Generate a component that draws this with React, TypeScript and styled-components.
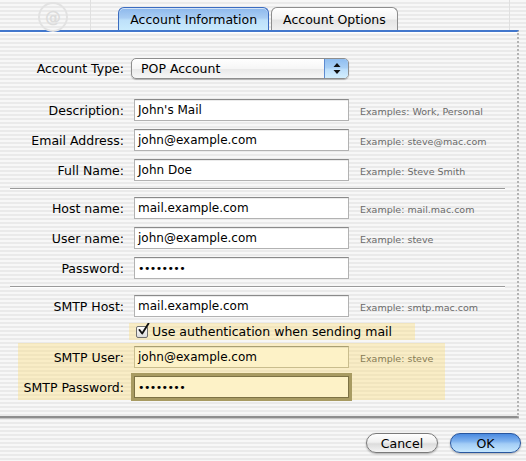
import React from 'react';
import styled, { createGlobalStyle } from 'styled-components';

const GlobalStyle = createGlobalStyle`
  html, body {
    margin: 0;
    padding: 0;
  }
  body {
    font-family: "DejaVu Sans", "Liberation Sans", sans-serif;
    color: #000;
  }
`;

const stripes =
  'repeating-linear-gradient(to bottom, #f7f7f7 0px, #f7f7f7 2px, #eaeaea 2px, #eaeaea 4px)';

export default function App() {
  return (
    <Window>
      <GlobalStyle />
      <TabBar>
        <Ghost style={{ left: 38 }}>@</Ghost>
        <GhostLine style={{ left: 90 }} />
        <GhostLine style={{ left: 509 }} />
        <Tab active>Account Information</Tab>
        <Tab>Account Options</Tab>
      </TabBar>

      <Panel>
        <Row>
          <Label>Account Type:</Label>
          <Popup>
            <PopupText>POP Account</PopupText>
            <PopupArrows>
              <svg width="8" height="11" viewBox="0 0 8 11">
                <path d="M4 0 L7.5 4 L0.5 4 Z" fill="#111" />
                <path d="M4 11 L7.5 7 L0.5 7 Z" fill="#111" />
              </svg>
            </PopupArrows>
          </Popup>
        </Row>

        <Group top={20}>
          <Row>
            <Label>Description:</Label>
            <Field>John's Mail</Field>
            <Hint>Examples: Work, Personal</Hint>
          </Row>
          <Row>
            <Label>Email Address:</Label>
            <Field>john@example.com</Field>
            <Hint>Example: steve@mac.com</Hint>
          </Row>
          <Row>
            <Label>Full Name:</Label>
            <Field>John Doe</Field>
            <Hint>Example: Steve Smith</Hint>
          </Row>
        </Group>

        <Separator />

        <Group>
          <Row>
            <Label>Host name:</Label>
            <Field>mail.example.com</Field>
            <Hint>Example: mail.mac.com</Hint>
          </Row>
          <Row>
            <Label>User name:</Label>
            <Field>john@example.com</Field>
            <Hint>Example: steve</Hint>
          </Row>
          <Row>
            <Label>Password:</Label>
            <Field secret>••••••••</Field>
          </Row>
        </Group>

        <Separator />

        <Row>
          <Label>SMTP Host:</Label>
          <Field>mail.example.com</Field>
          <Hint>Example: smtp.mac.com</Hint>
        </Row>

        <CheckRow>
          <CheckBox>
            <svg width="13" height="14" viewBox="0 0 13 14">
              <path
                d="M2.5 7 L5.2 10.5 L11.5 0.5"
                fill="none"
                stroke="#111"
                strokeWidth="1.9"
                strokeLinecap="round"
                strokeLinejoin="round"
              />
            </svg>
          </CheckBox>
          <CheckLabel>Use authentication when sending mail</CheckLabel>
        </CheckRow>

        <Highlight>
          <Row>
            <Label narrow>SMTP User:</Label>
            <Field tinted>john@example.com</Field>
            <Hint tinted>Example: steve</Hint>
          </Row>
          <Row>
            <Label narrow>SMTP Password:</Label>
            <Field tinted focused secret>
              ••••••••
            </Field>
          </Row>
        </Highlight>
      </Panel>

      <Buttons>
        <PillButton>Cancel</PillButton>
        <PillButton primary>OK</PillButton>
      </Buttons>
    </Window>
  );
}

const Window = styled.div`
  width: 526px;
  height: 461px;
  background: ${stripes};
  overflow: hidden;
  display: flex;
  flex-direction: column;
`;

const TabBar = styled.div`
  position: relative;
  height: 30px;
  display: flex;
  justify-content: center;
  align-items: flex-end;
  gap: 2px;
  padding-right: 10px;
  z-index: 2;
`;

const Ghost = styled.span`
  position: absolute;
  top: 2px;
  width: 26px;
  height: 26px;
  border-radius: 50%;
  border: 2px solid #e2e2e2;
  color: #dcdcdc;
  font-size: 16px;
  font-weight: bold;
  display: flex;
  align-items: center;
  justify-content: center;
`;

const GhostLine = styled.span`
  position: absolute;
  top: 0;
  width: 1px;
  height: 30px;
  background: #e0e0e0;
`;

const Tab = styled.div<{ active?: boolean }>`
  height: 23px;
  box-sizing: border-box;
  padding: 0 11px;
  display: flex;
  align-items: center;
  font-size: 12.5px;
  border-radius: 6px 6px 0 0;
  border: 1px solid ${(p) => (p.active ? '#3b6cc0' : '#8d8d8d')};
  border-bottom: none;
  background: ${(p) =>
    p.active
      ? 'linear-gradient(to bottom, #8db8ec 0%, #a9cdf3 45%, #bde0fa 55%, #c9ebfd 100%)'
      : 'linear-gradient(to bottom, #ffffff 0%, #f3f3f3 50%, #e4e4e4 55%, #f0f0f0 100%)'};
  box-shadow: inset 0 1px 0 rgba(255, 255, 255, 0.6);
`;

const Panel = styled.div`
  width: 519px;
  height: 388px;
  box-sizing: border-box;
  border-top: 2px solid #4277cc;
  border-right: 2px dotted #b4b4b4;
  border-bottom: 2px solid #8e8e8e;
  box-shadow: 0 1px 0 #c4c4c4, inset 0 1px 0 #ffffff;
  padding-top: 25px;
  display: flex;
  flex-direction: column;
`;

const Group = styled.div<{ top?: number }>`
  display: flex;
  flex-direction: column;
  gap: 8px;
  margin-top: ${(p) => p.top ?? 0}px;
`;

const Row = styled.div`
  display: flex;
  align-items: center;
  height: 22px;
`;

const Label = styled.div<{ narrow?: boolean }>`
  width: ${(p) => (p.narrow ? 106 : 124)}px;
  flex-shrink: 0;
  text-align: right;
  font-size: 12.5px;
  white-space: nowrap;
`;

const Field = styled.div<{ tinted?: boolean; focused?: boolean; secret?: boolean }>`
  margin-left: 10px;
  width: 215px;
  height: 22px;
  box-sizing: border-box;
  padding: 0 0 0 3px;
  display: flex;
  align-items: center;
  font-size: ${(p) => (p.secret ? 11 : 12)}px;
  letter-spacing: ${(p) => (p.secret ? '-0.6px' : 'normal')};
  background: ${(p) => (p.tinted ? '#fdf2c7' : '#ffffff')};
  border: 1px solid ${(p) => (p.tinted ? '#c9bd8d' : '#b2b2b2')};
  border-top-color: ${(p) => (p.focused ? '#7d7244' : p.tinted ? '#a99f72' : '#8a8a8a')};
  box-shadow: ${(p) =>
    p.focused ? '0 0 0 3px #a89b62' : 'inset 0 1px 0 rgba(0,0,0,0.08)'};
  ${(p) => (p.focused ? 'border-color: #7d7244;' : '')}
`;

const Hint = styled.div<{ tinted?: boolean }>`
  margin-left: 11px;
  font-size: 9.5px;
  color: ${(p) => (p.tinted ? '#877c55' : '#6a6a6a')};
  white-space: nowrap;
  padding-top: 2px;
`;

const Popup = styled.div`
  margin-left: 7px;
  width: 218px;
  height: 21px;
  box-sizing: border-box;
  display: flex;
  border: 1px solid #8e8e8e;
  border-radius: 5px;
  overflow: hidden;
  background: linear-gradient(to bottom, #ffffff 0%, #f6f6f6 50%, #e9e9e9 55%, #f7f7f7 100%);
  box-shadow: 0 1px 1px rgba(0, 0, 0, 0.25);
`;

const PopupText = styled.div`
  flex: 1;
  display: flex;
  align-items: center;
  padding-left: 9px;
  font-size: 12.5px;
`;

const PopupArrows = styled.div`
  width: 23px;
  display: flex;
  align-items: center;
  justify-content: center;
  border-left: 1px solid #5c8ad0;
  background: linear-gradient(to bottom, #8fbdf0 0%, #a8cff5 45%, #bcdefb 55%, #d3eefd 100%);
`;

const Separator = styled.div`
  margin: 7px 12px 8px 10px;
  height: 1px;
  background: #9a9a9a;
  box-shadow: 0 1px 0 #ffffff;
`;

const CheckRow = styled.div`
  margin: 6px 0 0 129px;
  width: 286px;
  height: 17px;
  box-sizing: border-box;
  padding-left: 7px;
  display: flex;
  align-items: center;
  gap: 4px;
  background: rgba(255, 220, 100, 0.33);
`;

const CheckBox = styled.div`
  position: relative;
  width: 12px;
  height: 12px;
  box-sizing: border-box;
  border: 1px solid #6f6f6f;
  border-radius: 2px;
  background: linear-gradient(to bottom, #ffffff, #dcdcdc);
  display: flex;

  svg {
    position: absolute;
    left: 0;
    top: -4px;
  }
`;

const CheckLabel = styled.div`
  font-size: 12.5px;
  white-space: nowrap;
`;

const Highlight = styled.div`
  margin: 3px 0 0 18px;
  width: 427px;
  height: 57px;
  box-sizing: border-box;
  padding-top: 3px;
  display: flex;
  flex-direction: column;
  gap: 8px;
  background: rgba(255, 220, 100, 0.33);
`;

const Buttons = styled.div`
  display: flex;
  justify-content: flex-end;
  gap: 12px;
  padding: 15px 5px 0 0;
`;

const PillButton = styled.div<{ primary?: boolean }>`
  width: ${(p) => (p.primary ? 71 : 72)}px;
  height: 20px;
  box-sizing: border-box;
  border-radius: 10px;
  display: flex;
  align-items: center;
  justify-content: center;
  font-size: 12.5px;
  border: 1px solid ${(p) => (p.primary ? '#28569e' : '#7a7a7a')};
  background: ${(p) =>
    p.primary
      ? 'linear-gradient(to bottom, #4a8ae0 0%, #7fb2ee 40%, #a3cdf6 55%, #c4e6fd 100%)'
      : 'linear-gradient(to bottom, #ffffff 0%, #f0f0f0 45%, #dcdcdc 55%, #f4f4f4 100%)'};
  box-shadow: 0 1px 2px rgba(0, 0, 0, 0.3);
`;
